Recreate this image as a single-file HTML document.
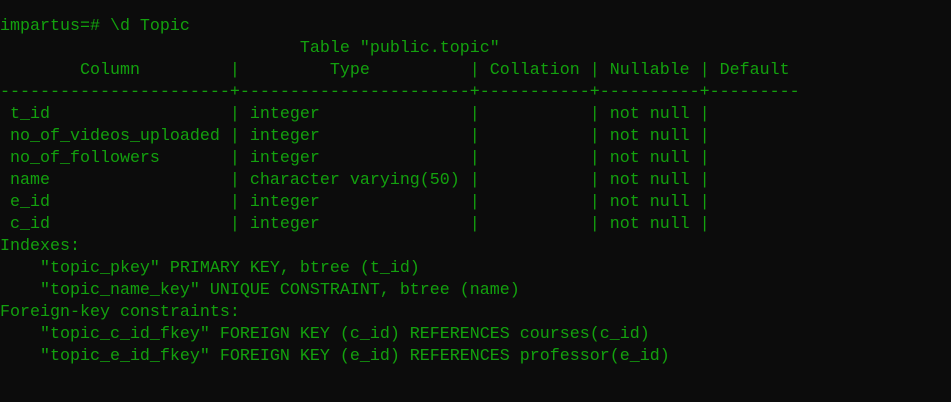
<!DOCTYPE html><html><head><style>
html,body{margin:0;background:#0c0c0c;width:951px;height:402px;overflow:hidden}
pre{margin:0;position:absolute;left:0;top:16px;font-family:"Liberation Mono",monospace;font-size:16.67px;line-height:22px;color:#13a10e;letter-spacing:0}
</style></head><body><pre>impartus=# \d Topic
                              Table "public.topic"
        Column         |         Type          | Collation | Nullable | Default
-----------------------+-----------------------+-----------+----------+---------
 t_id                  | integer               |           | not null |
 no_of_videos_uploaded | integer               |           | not null |
 no_of_followers       | integer               |           | not null |
 name                  | character varying(50) |           | not null |
 e_id                  | integer               |           | not null |
 c_id                  | integer               |           | not null |
Indexes:
    "topic_pkey" PRIMARY KEY, btree (t_id)
    "topic_name_key" UNIQUE CONSTRAINT, btree (name)
Foreign-key constraints:
    "topic_c_id_fkey" FOREIGN KEY (c_id) REFERENCES courses(c_id)
    "topic_e_id_fkey" FOREIGN KEY (e_id) REFERENCES professor(e_id)
</pre></body></html>
